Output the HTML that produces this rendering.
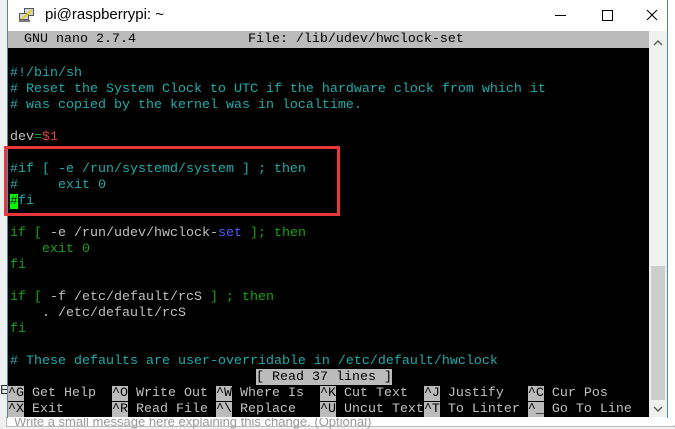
<!DOCTYPE html>
<html><head><meta charset="utf-8"><style>
*{margin:0;padding:0;box-sizing:border-box}
body{width:675px;height:425px;overflow:hidden;background:#f0f0f0;position:relative;font-family:"Liberation Sans",sans-serif}
.win{position:absolute;left:7px;top:0;width:661px;height:418px;background:#fff;border-left:1px solid #4a88c9;border-right:1px solid #4a88c9}
.title{position:absolute;left:37px;top:6px;font-size:15px;color:#000}
.term{position:absolute;left:8px;top:31px;width:641px;height:386px;background:#000;font-family:"Liberation Mono",monospace;font-size:13.33px;line-height:16px;color:#c0c0c0}
.r{position:absolute;left:0;height:16px;white-space:pre}
.c{color:#19aeae}.g{color:#13a313}.w{color:#c0c0c0}.red{color:#e04040}.b{color:#5555ff}
.inv{background:#bbb;color:#000}
.sb{position:absolute;left:649px;top:31px;width:18px;height:386px;background:#f0f0f0}
.thumb{position:absolute;left:2px;top:235px;width:14px;height:134px;background:#cdcdcd}
.box{position:absolute;left:4px;top:146px;width:336px;height:70px;border:3px solid #e8373a}
</style></head><body>
<div style="position:absolute;left:0;top:382px;font-size:13px;color:#333;width:7px;overflow:hidden">E</div>
<div style="position:absolute;left:6px;top:417px;width:669px;height:10px;background:#fff;border:1px solid #bbb"></div>
<div style="position:absolute;left:14px;top:414px;font-size:13px;color:#999">Write a small message here explaining this change. (Optional)</div>
<div style="position:absolute;left:668px;top:0;width:7px;height:425px;background:#fff"></div>
<div class="win">
<svg style="position:absolute;left:10px;top:7px" width="18" height="16" viewBox="0 0 18 16"><rect x="6" y="1" width="10" height="8" fill="#555"/><rect x="7" y="2" width="8" height="6" fill="#cfd8e8"/><rect x="1" y="6" width="10" height="8" fill="#555"/><rect x="2" y="7" width="8" height="5" fill="#cfd8e8"/><path d="M4 12 L14 3" stroke="#e8d000" stroke-width="2"/><rect x="1" y="13" width="11" height="2" fill="#777"/></svg>
<div class="title">pi@raspberrypi: ~</div>
<svg style="position:absolute;left:540px;top:8px" width="120" height="16"><path d="M7 7.5h11" stroke="#000" stroke-width="1"/><rect x="54.5" y="2.5" width="10" height="10" fill="none" stroke="#000"/><path d="M99 2l10 10M109 2l-10 10" stroke="#000" stroke-width="1.1"/></svg>
</div>
<div class="term">
<div class="r inv" style="top:0;width:641px;height:17px;line-height:18px">  GNU nano 2.7.4              File: /lib/udev/hwclock-set                         </div>
<div class="r c" style="top:35px;left:2px">#!/bin/sh</div>
<div class="r c" style="top:51px;left:2px"># Reset the System Clock to UTC if the hardware clock from which it</div>
<div class="r c" style="top:67px;left:2px"># was copied by the kernel was in localtime.</div>
<div class="r" style="top:99px;left:2px">dev<span class="g">=</span><span class="red">$1</span></div>
<div class="r c" style="top:131px;left:2px">#if [ -e /run/systemd/system ] ; then</div>
<div class="r c" style="top:147px;left:2px">#     exit 0</div>
<div class="r c" style="top:163px;left:2px"><span style="background:#0f0;color:#000">#</span>fi</div>
<div class="r" style="top:195px;left:2px"><span class="g">if [</span> -e /run/udev/hwclock-<span class="b">set</span> <span class="g">]; then</span></div>
<div class="r g" style="top:211px;left:2px">    exit 0</div>
<div class="r g" style="top:227px;left:2px">fi</div>
<div class="r" style="top:259px;left:2px"><span class="g">if [</span> -f /etc/default/rcS <span class="g">] ; then</span></div>
<div class="r" style="top:275px;left:2px">    . /etc/default/rcS</div>
<div class="r g" style="top:291px;left:2px">fi</div>
<div class="r c" style="top:323px;left:2px"># These defaults are user-overridable in /etc/default/hwclock</div>
<div class="r inv" style="top:338px;left:248px;line-height:17px">[ Read 37 lines ]</div>
<div class="r" style="top:355px"><span class="inv">^G</span> Get Help  <span class="inv">^O</span> Write Out <span class="inv">^W</span> Where Is  <span class="inv">^K</span> Cut Text  <span class="inv">^J</span> Justify   <span class="inv">^C</span> Cur Pos</div>
<div class="r" style="top:371px"><span class="inv">^X</span> Exit      <span class="inv">^R</span> Read File <span class="inv">^\</span> Replace   <span class="inv">^U</span> Uncut Text<span class="inv">^T</span> To Linter <span class="inv">^_</span> Go To Line</div>
</div>
<div class="sb"><svg style="position:absolute;left:4px;top:8px" width="10" height="8"><path d="M1 6l4-4 4 4" stroke="#606060" stroke-width="1.5" fill="none"/></svg><div class="thumb"></div><svg style="position:absolute;left:4px;top:374px" width="10" height="8"><path d="M1 2l4 4 4-4" stroke="#606060" stroke-width="1.5" fill="none"/></svg></div>
<div class="box"></div>
</body></html>
